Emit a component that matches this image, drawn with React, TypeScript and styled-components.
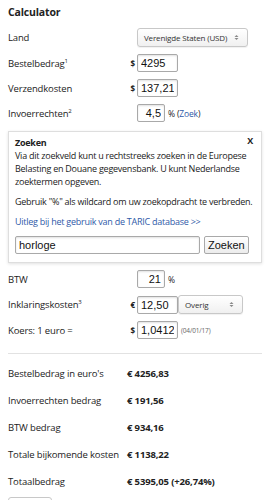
import React, { useState } from 'react';
import styled, { createGlobalStyle } from 'styled-components';

const GlobalStyle = createGlobalStyle`
  body {
    margin: 0;
    background: #fff;
    color: #222;
    font-family: "Open Sans", "DejaVu Sans", sans-serif;
    font-size: 9px;
    letter-spacing: -0.15px;
  }
`;

const Page = styled.div`
  padding: 4px 8px 0;
  width: 254px;
`;

const Title = styled.div`
  font-weight: 700;
  font-size: 10.5px;
  line-height: 16px;
  margin-bottom: 8px;
`;

const Form = styled.div`
  display: flex;
  flex-direction: column;
  gap: 7px;
`;

const Row = styled.div`
  display: flex;
  align-items: center;
  min-height: 18px;
`;

const Label = styled.div`
  width: 118px;
  font-size: 9.5px;
  sup {
    font-size: 6px;
    vertical-align: top;
    line-height: 8px;
  }
`;

const Currency = styled.span`
  width: 9px;
  margin-right: 2px;
  text-align: right;
  font-size: 8px;
  font-weight: 700;
`;

const Input = styled.input<{ $w: number; $right?: boolean }>`
  box-sizing: border-box;
  width: ${p => p.$w}px;
  height: 18px;
  padding: 0 3px;
  border: 1px solid #a9a9a9;
  border-radius: 2px;
  box-shadow: inset 0 1px 2px rgba(0, 0, 0, 0.12);
  font-family: "Liberation Sans", Arial, sans-serif;
  font-size: 11px;
  letter-spacing: 0;
  color: #111;
  text-align: ${p => (p.$right ? 'right' : 'left')};
  outline: none;
`;

const SelectBox = styled.div<{ $w: number }>`
  box-sizing: border-box;
  width: ${p => p.$w}px;
  height: 19px;
  display: flex;
  align-items: center;
  justify-content: space-between;
  padding: 0 8px 0 6px;
  border: 1px solid #c8c8c8;
  border-radius: 3px;
  background: linear-gradient(#fff, #f0f0f0);
  box-shadow: 0 1px 1px rgba(0, 0, 0, 0.06);
  font-size: 8px;
  color: #333;
`;

const Arrows = styled.svg`
  width: 5px;
  height: 7px;
`;

const After = styled.span<{ $small?: boolean }>`
  margin-left: 3px;
  font-size: ${p => (p.$small ? '6.5px' : '8.5px')};
  color: ${p => (p.$small ? '#666' : '#222')};
`;

const Link = styled.a`
  color: #2f5aa8;
  text-decoration: none;
`;

const SearchPanel = styled.div`
  position: relative;
  margin-top: 2px;
  border: 1px solid #dedede;
  box-shadow: 0 1px 3px rgba(0, 0, 0, 0.12);
  padding: 4px 6px 8px;
  font-size: 9px;
  letter-spacing: -0.25px;
  line-height: 13px;
  p {
    margin: 0 0 7px;
  }
`;

const PanelTitle = styled.div`
  font-weight: 700;
`;

const Close = styled.span`
  position: absolute;
  top: 2px;
  right: 8px;
  font-size: 9px;
  font-weight: 700;
`;

const SearchRow = styled.div`
  display: flex;
  gap: 4px;
  margin-top: 8px;
`;

const Button = styled.button`
  box-sizing: border-box;
  height: 18px;
  padding: 0 3px;
  border: 1px solid #a9a9a9;
  border-radius: 2px;
  background: linear-gradient(#fff, #ececec);
  font-family: "Liberation Sans", Arial, sans-serif;
  font-size: 11px;
  color: #111;
`;

const Rule = styled.hr`
  border: 0;
  border-top: 1px solid #e2e2e2;
  margin: 14px 0 6px;
`;

const Results = styled.div`
  display: grid;
  grid-template-columns: 119px 1fr;
  grid-auto-rows: 27px;
  align-items: center;
  font-size: 9.5px;
`;

const Value = styled.div`
  font-weight: 700;
`;

const BottomButton = styled.div`
  width: 42px;
  height: 18px;
  margin-top: 2px;
  border: 1px solid #c8c8c8;
  border-radius: 3px;
`;

function Select({ width, text }: { width: number; text: string }) {
  return (
    <SelectBox $w={width}>
      <span>{text}</span>
      <Arrows viewBox="0 0 5 7">
        <path d="M0.5 3 L2.5 1 L4.5 3 Z M0.5 4 L2.5 6 L4.5 4 Z" fill="#888" />
      </Arrows>
    </SelectBox>
  );
}

const results: [string, string][] = [
  ["Bestelbedrag in euro's", '€ 4256,83'],
  ['Invoerrechten bedrag', '€ 191,56'],
  ['BTW bedrag', '€ 934,16'],
  ['Totale bijkomende kosten', '€ 1138,22'],
  ['Totaalbedrag', '€ 5395,05 (+26,74%)'],
];

export default function App() {
  const [query, setQuery] = useState('horloge');

  return (
    <Page>
      <GlobalStyle />
      <Title>Calculator</Title>
      <Form>
        <Row>
          <Label>Land</Label>
          <Currency />
          <Select width={111} text="Verenigde Staten (USD)" />
        </Row>
        <Row>
          <Label>Bestelbedrag<sup>1</sup></Label>
          <Currency>$</Currency>
          <Input $w={41} defaultValue="4295" />
        </Row>
        <Row>
          <Label>Verzendkosten</Label>
          <Currency>$</Currency>
          <Input $w={41} defaultValue="137,21" />
        </Row>
        <Row>
          <Label>Invoerrechten<sup>2</sup></Label>
          <Currency />
          <Input $w={28} $right defaultValue="4,5" />
          <After>% (<Link href="#">Zoek</Link>)</After>
        </Row>
        <SearchPanel>
          <Close>X</Close>
          <PanelTitle>Zoeken</PanelTitle>
          <p>
            Via dit zoekveld kunt u rechtstreeks zoeken in de Europese Belasting en Douane
            gegevensbank. U kunt Nederlandse zoektermen opgeven.
          </p>
          <p>Gebruik "%" als wildcard om uw zoekopdracht te verbreden.</p>
          <Link href="#">Uitleg bij het gebruik van de TARIC database &gt;&gt;</Link>
          <SearchRow>
            <Input $w={185} value={query} onChange={e => setQuery(e.target.value)} />
            <Button>Zoeken</Button>
          </SearchRow>
        </SearchPanel>
        <Row>
          <Label>BTW</Label>
          <Currency />
          <Input $w={28} $right defaultValue="21" />
          <After>%</After>
        </Row>
        <Row>
          <Label>Inklaringskosten<sup>3</sup></Label>
          <Currency>€</Currency>
          <Input $w={41} defaultValue="12,50" />
          <Select width={65} text="Overig" />
        </Row>
        <Row>
          <Label>Koers: 1 euro =</Label>
          <Currency>$</Currency>
          <Input $w={41} defaultValue="1,0412" />
          <After $small>(04/01/17)</After>
        </Row>
      </Form>
      <Rule />
      <Results>
        {results.map(([label, value]) => (
          <React.Fragment key={label}>
            <div>{label}</div>
            <Value>{value}</Value>
          </React.Fragment>
        ))}
      </Results>
      <BottomButton />
    </Page>
  );
}
